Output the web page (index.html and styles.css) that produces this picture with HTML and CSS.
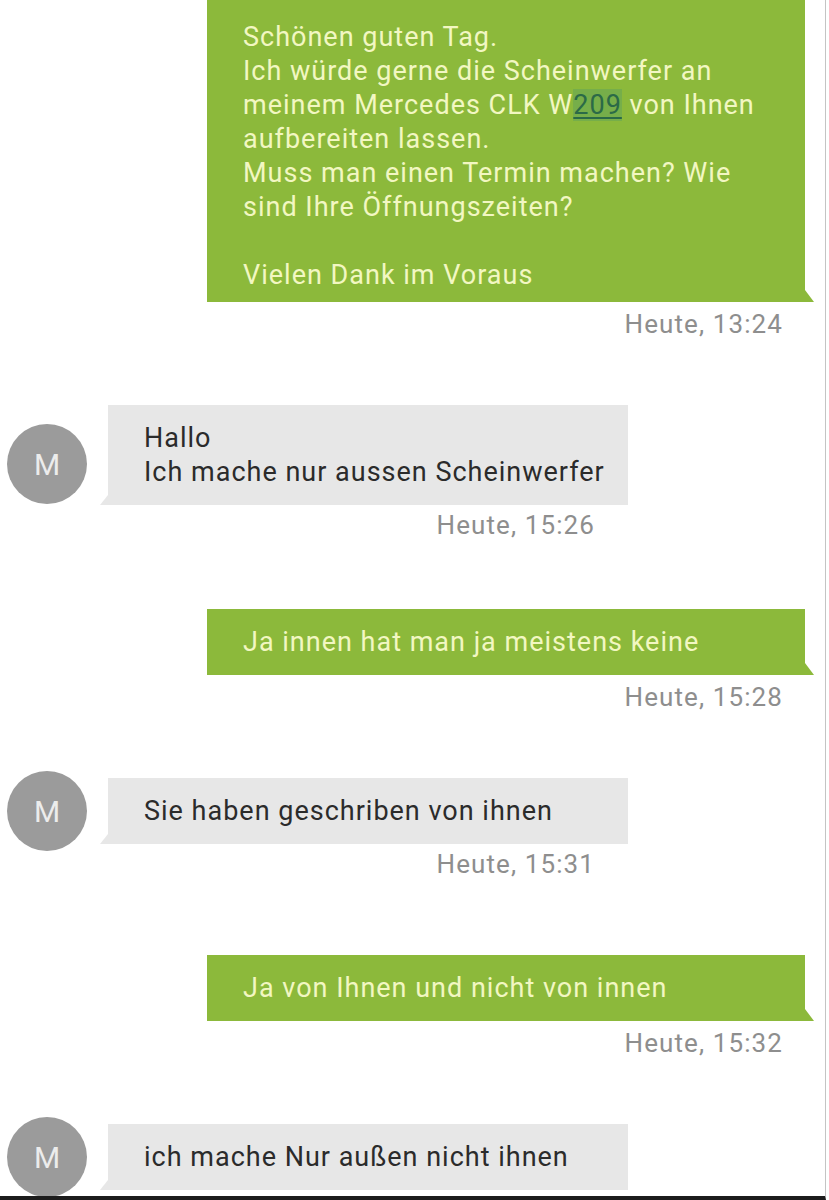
FILE: index.html
```html
<!DOCTYPE html>
<html lang="de">
<head>
    <meta charset="UTF-8">
    <meta name="viewport" content="width=device-width, initial-scale=1.0">
    <title>Nachrichten</title>
    <link rel="stylesheet" href="styles.css">
</head>
<body>
    <div class="thread">
        <!-- outgoing -->
        <div class="msg out">
            <div class="bubble first">Schönen guten Tag.<br>Ich würde gerne die Scheinwerfer an<br>meinem Mercedes CLK W<span class="link">209</span> von Ihnen<br>aufbereiten lassen.<br>Muss man einen Termin machen? Wie<br>sind Ihre Öffnungszeiten?<br><br>Vielen Dank im Voraus</div>
            <div class="time">Heute, 13:24</div>
        </div>

        <div class="msg in">
            <div class="avatar low">M</div>
            <div class="bubble">Hallo<br>Ich mache nur aussen Scheinwerfer</div>
            <div class="time">Heute, 15:26</div>
        </div>

        <div class="msg out">
            <div class="bubble">Ja innen hat man ja meistens keine</div>
            <div class="time">Heute, 15:28</div>
        </div>

        <div class="msg in">
            <div class="avatar">M</div>
            <div class="bubble">Sie haben geschriben von ihnen</div>
            <div class="time">Heute, 15:31</div>
        </div>

        <div class="msg out wide-gap">
            <div class="bubble">Ja von Ihnen und nicht von innen</div>
            <div class="time">Heute, 15:32</div>
        </div>

        <div class="msg in">
            <div class="avatar">M</div>
            <div class="bubble">ich mache Nur außen nicht ihnen</div>
        </div>
    </div>
</body>
</html>
```

FILE: styles.css
```css
body {
    margin: 0;
    padding: 0;
    background-color: #ffffff;
    font-family: Roboto, "Noto Sans", Arial, sans-serif;
}

.thread {
    width: 825px;
    height: 1196px;
    border-right: 1px solid #c4c4c4;
    border-bottom: 4px solid #1c1c1c;
    overflow: hidden;
}

.msg {
    margin-bottom: 66px;
}

.bubble {
    position: relative;
    font-size: 27px;
    letter-spacing: 1px;
    line-height: 34px;
    padding: 16px 36px;
    white-space: nowrap;
}

.time {
    font-size: 26px;
    line-height: 30px;
    color: #8e8e8e;
    letter-spacing: 1.1px;
}

/* outgoing (green) */
.msg.out {
    display: flex;
    flex-direction: column;
    align-items: flex-end;
    margin-right: 20px;
}

.msg.out .bubble {
    width: 598px;
    box-sizing: border-box;
    background-color: #8cb93b;
    color: #f2f7c2;
}

.msg.out .bubble::after {
    content: "";
    position: absolute;
    right: -9px;
    bottom: 0;
    border-left: 9px solid #8cb93b;
    border-top: 12px solid transparent;
}

.msg.out .bubble.first {
    padding-top: 20px;
    padding-bottom: 10px;
}

.msg.out .time {
    margin-right: 22px;
    margin-top: 7px;
}

.msg.wide-gap {
    padding-top: 7px;
}

.link {
    color: #2b6a47;
    text-decoration: underline;
    text-decoration-thickness: 2px;
    text-underline-offset: 3px;
    background-color: rgba(70, 150, 110, 0.3);
}

/* incoming (grey) */
.msg.in {
    display: grid;
    grid-template-columns: 108px 520px;
    margin-bottom: 69px;
}

.msg.in .bubble {
    grid-column: 2;
    grid-row: 1;
    background-color: #e7e7e7;
    color: #2b2b2b;
}

.msg.in .bubble::after {
    content: "";
    position: absolute;
    left: -8px;
    bottom: 0;
    border-right: 8px solid #e7e7e7;
    border-top: 10px solid transparent;
}

.msg.in .time {
    grid-column: 2;
    justify-self: end;
    margin-right: 33px;
    margin-top: 5px;
}

.avatar {
    grid-column: 1;
    grid-row: 1;
    align-self: center;
    justify-self: start;
    margin: -10px 0 -10px 7px;
    width: 80px;
    height: 80px;
    border-radius: 50%;
    background-color: #9b9b9b;
    color: #ececec;
    font-size: 30px;
    display: flex;
    align-items: center;
    justify-content: center;
}

.avatar.low {
    margin-top: 8px;
    margin-bottom: -10px;
}
```
